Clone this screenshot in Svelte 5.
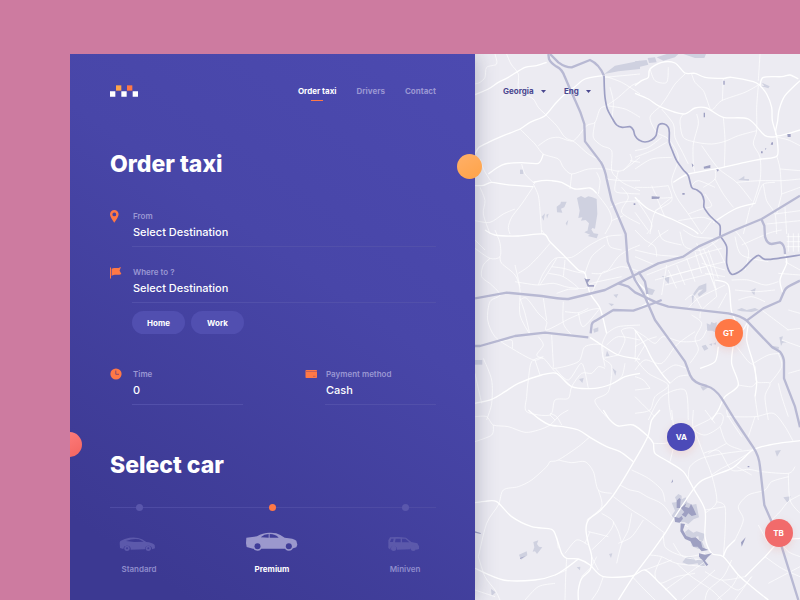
<script>
  let car = $state('Premium');
  const links = ['Order taxi', 'Drivers', 'Contact'];
  const pins = [
    { name: 'GT', x: 78, y: 51.1, color: '#ff7846' },
    { name: 'VA', x: 63.5, y: 70.2, color: '#4c4ab8' },
    { name: 'TB', x: 93.4, y: 87.8, color: '#f16b6b' }
  ];

  /* Turns straight survey lines into a curve through the same points. */
  function smooth(d) {
    if (/[HVQ]/.test(d)) return d;
    return d
      .split('M')
      .filter(Boolean)
      .map((part) => {
        const n = part.match(/[\d.]+/g).map(Number);
        const p = [];
        for (let i = 0; i < n.length; i += 2) p.push([n[i], n[i + 1]]);
        let out = `M${p[0]}`;
        for (let i = 0; i < p.length - 1; i++) {
          const a = p[i - 1] ?? p[i];
          const b = p[i];
          const c = p[i + 1];
          const e = p[i + 2] ?? c;
          const c1 = [b[0] + (c[0] - a[0]) / 7, b[1] + (c[1] - a[1]) / 7];
          const c2 = [c[0] - (e[0] - b[0]) / 7, c[1] - (e[1] - b[1]) / 7];
          out += `C${c1} ${c2} ${c}`;
        }
        return out;
      })
      .join('');
  }

  const highways = [
    'M220 0 222 15Q228 28 245 38 262 46 270 70L285 105 300 138Q318 175 328 210L330 262 378 325Q390 345 395 375L410 440 452 540 458 623 480 678 505 718 540 798 580 853 630 923 645 963Q655 988 695 996 720 1003 740 1033L780 1098 800 1128 835 1180Q852 1205 855 1238L868 1353 890 1403 920 1478 970 1638',
    'M0 733 95 716 200 726Q260 736 280 735L390 708 440 683 480 663 550 628 625 608Q650 590 670 578L780 528 860 495 975 425',
    'M430 688 460 698 480 715 550 748 580 758 760 778Q800 786 815 800L890 878 915 893Q928 910 927 928L927 973 960 1058 975 1120',
    'M815 800 865 763 915 741 925 718Q930 702 945 695L975 680',
    'M0 876H15L120 846 210 836 340 850',
    'M347 838 350 812Q352 804 362 800L415 768 475 770 530 750 560 738',
    'M490 653 510 683 517 720',
    'M860 497 868 515 870 548Q876 570 890 570L915 565Q930 570 930 600'
  ];
  const canals = ['M225 0 250 25Q270 40 290 40L345 18Q372 30 387 65'];
  const rivers = [
    'M387 65 388 100 390 130 397 165 410 190 425 213 442 220 465 218 475 228 480 245 492 258 510 264 530 258 543 245 547 225 552 212 568 210 580 220 583 235 583 265 592 290 605 320 625 348 640 365 650 400 666 408 680 420 687 440 687 460 702 482 720 500 735 515 735 545',
    'M735 545 755 578 755 628 770 661 800 648 830 618 850 604 870 616 910 613 975 603'
  ];
  const lakes = [
    'M388 60 420 35 495 20V45L430 52Z',
    'M480 22 515 18 520 32 480 42ZM518 12 540 10 545 25 522 27ZM545 10 575 0H610L600 10 565 20ZM625 0H693L688 12H660Z',
    'M306 432 318 426 330 432 340 427 352 430 365 435 367 480 360 524 352 522 345 535 338 527 342 508 332 498 318 500 322 490 310 492 314 470Z',
    'M245 458 256 450 258 443 275 443 268 460 258 464 262 476 246 475Z',
    'M200 488 210 478 206 500ZM214 482 221 479 216 494ZM272 508 280 497 276 515Z',
    'M135 347 145 347V360H135Z',
    'M0 918H22V932H0Z',
    'M328 535 340 528 350 528 356 538 370 540 365 553 338 546 345 542Z',
    'M355 825 370 820V832L357 836Z',
    'M415 722 430 720 424 732ZM400 748 417 750 410 757Z',
    'M396 890 404 907H392ZM412 942 424 952 421 965ZM312 975 326 972 322 987Z',
    'M850 97 868 96 860 86 884 97 880 103 868 99Z',
    'M790 378 808 366V375H822V380Z',
    'M560 666 583 669 581 690ZM515 700 540 708 532 723 515 720Z',
    'M650 727 664 706 672 696 694 688 694 712 672 728 668 720 684 706 672 708 656 728 654 756Z',
    'M695 808 706 812 709 804 718 808 725 804 725 838 712 830 697 830Z',
    'M680 876 692 872 700 884 688 890ZM702 871 712 868 710 876ZM714 870 723 865V872Z',
    'M826 710 842 702 838 724Z',
    'M913 850 924 847 920 860 936 865 923 866 918 876ZM890 875 912 879 910 891 890 884Z',
    'M676 997 702 998 684 1010Z',
    'M785 768 800 762 815 768 840 762 852 768 830 774 800 772Z',
    'M175 1464 190 1459 186 1470 192 1478 202 1480 186 1500 180 1492 173 1493 178 1480Z',
    'M132 1502 155 1492 157 1504 138 1517Z',
    'M900 1190 918 1188 912 1198 906 1208ZM925 1330 947 1327 938 1347Z',
    'M402 1500 412 1498 408 1512ZM305 1540 316 1538 315 1549Z',
    'M590 1346 606 1344 600 1330 610 1320 620 1325V1336L632 1330 636 1345 652 1352 664 1350 672 1390 656 1396 640 1410 628 1404 608 1405 590 1385 600 1370Z',
    'M630 1434 640 1426 655 1436 665 1432 690 1440 684 1462 672 1458 670 1446 655 1452 660 1462 634 1450Z',
    'M650 1468 680 1460 690 1483 678 1478 670 1485 650 1476Z',
    'M622 1525 635 1508 656 1512 662 1520 685 1508 690 1540 672 1536 668 1528 640 1532Z',
    'M48 1605 62 1615 50 1626Z'
  ];
  const ponds = [
    'M328 672 334 676 346 675 338 686 342 693H357V698H338Z',
    'M686 338 706 333V342L687 344ZM530 427 555 428 552 434 530 435Z',
    'M937 240H947V249H938ZM650 328 656 334 652 340Z',
    'M605 1340 613 1332 617 1336 615 1362H605ZM618 1362 634 1348 630 1358 642 1362 648 1350 655 1362 664 1382 650 1386 640 1378 632 1390 620 1382 628 1374Z',
    'M598 1388 612 1392 620 1386 624 1394 614 1406 600 1404Z',
    'M617 1408 630 1410 624 1428 634 1446 650 1452 662 1450 678 1464 682 1480 700 1488 680 1492 668 1478 655 1478 646 1462 630 1455 616 1432Z',
    'M672 1498 690 1502 711 1498 698 1510 690 1520 700 1532 694 1536 684 1520 672 1508Z',
    'M592 1276 594 1283 589 1288ZM798 1465 812 1450 808 1460 800 1478Z',
    'M0 1432 17 1437V1440L0 1436ZM135 1512 152 1506 136 1515Z',
    'M818 1236H823V1240H818ZM476 448H481V453H476ZM622 417H629V422H622ZM724 345 732 347 728 353Z',
    'M745 80H749V92H745ZM686 176H690V190H686ZM890 265H894V272H887ZM858 292H863V298H858ZM870 284 874 282 872 288Z'
  ];

  /* Road sheets are digitised in five tiles; x and y place each tile on the map. */
  const tiles = [
    {
      x: 0, y: 0,
      major: [
        'M0 300 12 280 40 265 85 245 135 225 165 205 210 185 240 150 270 120 300 98 330 75 382 65',
        'M0 122 40 105 70 85 100 70 150 40 185 35 215 25',
        'M0 395 25 394 50 385 95 392 175 398M40 360 65 342 90 330 140 326 190 328 205 300',
        'M175 385 200 380 230 380 260 385 300 405 345 402 365 418'
      ],
      minor: [
        'M0 90 15 85 30 70 35 40 65 30 60 0M95 0 108 30 130 60 130 100 150 120 175 135 190 160 210 180 245 215 270 250 300 265 340 300 380 320',
        'M190 275 220 255 250 250 295 260 335 215 360 205 375 165 395 155M135 225 180 270 205 300 250 315 265 340 290 360 340 345 395 345 440 350 495 310',
        'M290 360 285 405M15 315 28 350 50 385M175 390 190 425 195 470 200 540M175 398 140 450 110 490 100 520 105 540',
        'M140 330 150 360 180 390M0 500 45 505 85 480 120 465M15 400 30 440 25 480 45 540M365 418 400 465 410 500 390 540',
        'M360 205 355 250 380 275 410 290 410 350 430 375 450 390 495 410M385 65 440 85 495 120M390 70 495 60M395 155 450 165 495 190M395 155 430 130 470 95 495 85',
        'M395 375 440 380 495 380M430 350 420 410 460 418 495 420M440 400 460 430 440 475 495 510M465 320 495 325M405 460 440 445 495 440M445 350 470 320 465 300',
        'M370 420 375 380 365 355M410 500 445 485M405 100 415 145 410 200'
      ]
    },
    {
      x: 480, y: 0,
      major: [
        'M0 95 20 80 40 70 45 45 80 25 120 27 150 57 180 58 210 70 265 73 290 70 355 83 375 95 395 120 410 160 412 200 425 245',
        'M375 95 385 70 440 68 465 63 490 75M495 80 450 125 433 165 428 200 425 245 495 228',
        'M0 118 40 135 75 158 145 180 180 162 215 162 265 190 340 195 390 245 425 248',
        'M425 245 427 305 380 315 330 325 250 343 160 360 115 385',
        'M0 430 40 465 110 495 170 525 190 540M235 505 300 465 360 448'
      ],
      minor: [
        'M45 45 60 80 95 85 100 40M75 158 95 130 120 90 150 60M75 158 45 190 65 235 100 255 130 310 110 380 125 430 160 480 200 540',
        'M145 180 135 200 145 250 185 265 230 270 270 262 310 245 365 230M170 60 180 85 205 110 215 135 230 168 260 140 330 115 375 90M265 73 262 140',
        'M80 165 115 210 120 250 140 290 160 330M185 180 190 210 175 270 175 330 180 355M200 275 250 343 305 385 350 440M265 190 270 260 268 340',
        'M375 0 370 80M370 95 365 160 365 230 355 270 375 310 375 380 350 460M425 305 435 345 440 420M305 385 375 380 440 380 495 375',
        'M0 290 40 280 80 250M0 345 50 315 110 310M0 310 50 290 95 265M0 400 50 400 100 395M50 395 70 430 110 430M0 475 40 530M110 430 60 475 45 540M65 430 90 490',
        'M240 345 240 375 205 400M240 375 265 420 295 460M170 395 190 380 240 400M160 480 200 465 230 455 210 420M130 500 200 490 235 500',
        'M0 430 50 510 35 540M345 460 325 540M360 450 370 420 385 390 420 385M385 390 395 440 420 480 425 540M440 420 495 400M420 480 495 470M440 420 425 480M395 510 495 500M450 460 455 540',
        'M427 250 460 258 495 275M435 345 495 350M100 395 110 440 60 470M200 540 230 500'
      ]
    },
    {
      x: 0, y: 528,
      major: [
        'M30 0 60 15 130 18 205 12 225 35 270 80 310 120 330 130 345 190 375 235 395 310',
        'M0 520 50 508 90 485 130 460 200 435 245 430 290 470 360 475 410 462 450 440 495 430',
        'M345 322 380 345 430 375 495 388'
      ],
      minor: [
        'M60 0 75 40 75 80 45 85 0 55M75 80 80 100 120 135 135 180 135 255 165 315M225 40 190 80 160 110 130 130',
        'M45 85 25 105 20 140 50 165 75 195 45 215 38 270 60 320 110 355 175 390 205 385 240 425 290 470',
        'M120 155 150 160 190 165 235 160 280 172 330 175 350 160 440 140M190 165 205 130 240 85 290 82 345 45 395 20 440 15',
        'M245 85 230 110 195 165M230 110 265 115 300 125 330 130M220 130 265 140 310 175 280 178 245 190M135 210 155 205 190 250 215 275 215 300 285 265 345 240 375 235',
        'M265 215 265 280 290 315M165 315 150 250 135 205M270 245 310 248 340 235M310 248 325 290 375 235M205 205 215 270M190 320 205 345 185 375 205 385',
        'M75 335 110 330 112 355M230 315 235 400 240 415 310 395 330 350 380 345 385 385 410 410 400 485 360 510 380 545 405 570',
        'M205 380 170 395 160 450 155 500 155 545 225 555 240 510 280 505 290 470 320 430 350 430 370 410 390 415M180 390 195 435M240 415 280 450 320 400 340 475',
        'M25 385 50 450 50 520 35 570M0 430 20 520M350 190 380 130 400 120 430 80 460 60 495 45M350 130 380 130 440 110 495 125M395 20 405 50 440 60',
        'M330 130 350 80 390 45M395 310 430 290 495 285M395 345 430 320 495 330M430 375 450 330 440 300 480 300 480 388M410 462 440 440 450 400M395 310 380 350 390 410M385 385 430 375M225 555 240 570',
        'M120 105 135 170M265 140 270 90M200 0 210 15M0 30 30 60'
      ]
    },
    {
      x: 480, y: 528,
      major: [
        'M450 75 455 100 435 150 445 195M240 150 280 165 290 245 320 300 340 275 335 330 355 400 365 455 360 500',
        'M0 240 40 215 30 180 0 150M105 460 80 430 50 385 30 345 0 300M295 345 290 400 310 465 270 500 250 540 230 570',
        'M195 415 240 395 250 350'
      ],
      minor: [
        'M0 60 70 75 150 80M0 80 60 105M35 135 190 75 260 55M60 150 210 110 270 95M80 195 95 105M100 120 125 175M125 105 150 165M155 85 180 155M180 65 200 130',
        'M205 55 220 90 235 140 245 200M220 60 250 145M195 70 220 120 240 175M185 40 245 180M225 30 250 60 270 100M200 100 270 120M210 130 270 140M95 140 210 110M90 165 230 130',
        'M135 5 150 50 200 60 250 30M145 0 180 20 235 25M0 0 30 30 60 50 65 80M40 50 70 20 100 0M70 0 85 30 140 45M300 20 320 75 400 95M320 45 400 10 440 0M300 0 340 60 330 120',
        'M290 150 340 150 390 165 430 155M300 180 360 185 420 180M310 210 350 200 390 215M245 200 200 240 195 265M275 190 250 235M150 210 175 195 200 235M155 240 190 205 270 165',
        'M460 10V65M475 10V65M490 10V65M455 20H495M455 35H495M455 50H495',
        'M430 130 495 135M450 95 495 120M0 350 35 330 65 320',
        'M0 300 30 320 60 340 85 320 140 335 195 330 215 300M0 420 30 390 80 400 120 350 150 325 180 305M30 345 15 370 0 395M80 430 120 405 165 420M105 460 130 440 160 435',
        'M0 385 40 430 100 465 60 500 45 540 0 550M100 465 102 520 110 570M45 475 25 450 0 440M40 570 80 500 150 480 160 570M0 480 45 475M0 500 60 560',
        'M305 350 340 395 360 410 365 455 405 460 390 500 400 570M355 400 400 375 440 370M405 460 440 410 430 370M310 465 350 470 365 455M430 460 440 500 460 560M360 500 370 570',
        'M460 240 495 250M455 300 495 295M440 330 495 350M460 430 495 420M380 240 420 270 460 300M170 255 200 280 180 325 190 360 165 400'
      ]
    },
    {
      x: 0, y: 1068,
      major: [
        'M160 0 190 25 225 45 265 50 310 60 350 85 395 110 435 125 475 155M0 278 30 274 65 275 110 320 170 350 230 358 245 385 260 430 275 445 310 447 345 465 385 500 470 498 510 480 555 520 605 570',
        'M555 0 530 30 520 75 500 115 465 175 435 225 410 262 375 302 340 330 333 360 340 400 350 440 345 480 320 505 310 540 310 570',
        'M430 570 475 500 520 440 570 370 600 320 655 238 680 212 720 195 770 175 800 150 830 122 860 110 910 100 975 92',
        'M385 0 405 30 430 48 475 45 520 80 535 100 540 130 580 155 625 185 655 235 690 300 690 380 710 430 745 440 790 495 830 530 880 570',
        'M0 475 85 510 180 510 240 495 280 470 310 447M745 440 755 415 780 390M810 500 870 440 915 395 975 385'
      ],
      minor: [
        'M0 20 35 20 55 45 100 50 150 67 190 60 225 45 255 15 280 0M55 45 50 75 0 95M225 10 245 20 260 45M345 80 310 110 250 150 225 155 215 170 170 210 130 230 85 240 70 285 35 340 10 440',
        'M250 150 290 158 330 155 355 185 370 240 410 250M370 240 380 290 335 330M435 225 465 240 490 245 520 262 550 275 570 290 590 320M470 180 520 205 560 240 570 275M415 260 470 300 510 325 570 370',
        'M10 440 30 500 60 540 75 570M245 380 250 415M270 430 305 390 340 405M345 365 330 400M380 310 415 335 400 370 350 420M470 310 460 360 440 400 425 460M505 330 470 380 430 400',
        'M415 335 430 365 440 400M340 365 370 372 400 380M365 440 345 480M350 440 370 480M275 445 272 500 270 570M350 470 320 500M385 500 370 540 350 570M470 498 500 530 540 570M525 435 560 440 605 460 690 470',
        'M510 480 590 450M560 440 540 490 555 520 605 500 660 490M565 370 570 410 600 430 640 440 690 430M605 460 650 500 710 540 740 570M570 540 640 490 690 455M620 570 670 525 720 480M690 485 740 510 810 500',
        'M690 570 700 540 745 500 770 450M725 570 770 530 790 495M780 570 830 500M740 510 790 540 830 500M535 100 570 100 600 90 650 55 700 30 730 10 745 20 735 50 690 75 655 55 655 0M585 155 595 115M600 90 590 0',
        'M655 55 670 90 685 130 710 195 725 275 690 310M685 130 710 122 735 125 770 180 820 178 860 185 940 190 960 170M640 205 645 170 680 145 750 130 830 120M710 195 740 175 770 160 820 130M725 275 750 290 750 370 745 440',
        'M735 50 755 100 800 120M755 100 700 130M690 0 720 40M755 20 840 20 895 10 930 50 955 95M840 20 820 80M755 0 760 20 800 80M785 170 830 195M780 390 805 330 790 290 820 255 870 240 890 215 940 200',
        'M890 330 915 305 940 275 975 255M940 190 945 270 975 310M870 440 920 475 975 500M880 520 975 470M915 395 940 425 975 440M850 345 880 400',
        'M150 570 190 530 240 520M0 540 60 560M240 495 275 480M600 320 615 338 640 350M595 400 625 440 690 450M690 300 750 290'
      ]
    }
  ];
</script>

<main class="app">
  <section class="panel">
    <header class="top">
      <a class="logo" href="#home" aria-label="Home page">
        <svg width="29" height="12" viewBox="0 0 87 36">
          <path d="M0 19H16V35H0ZM34 19H50V35H34ZM68 19H84V35H68Z" fill="#fff" />
          <path d="M18 1H34V17H18Z" fill="#ffa549" />
          <path d="M51 1H67V17H51Z" fill="#ff7846" />
        </svg>
      </a>
      <nav>
        {#each links as link, i}
          <a href="#{link}" class:active={i === 0}>{link}</a>
        {/each}
      </nav>
    </header>

    <h1>Order taxi</h1>

    <form>
      <div class="field">
        <svg class="icon" viewBox="0 0 16 16"><path fill-rule="evenodd" d="M4.300 0A4.300 4.300 0 0 0 0 4.300C0 7.400 4.300 12.700 4.300 12.700S8.600 7.400 8.600 4.300A4.300 4.300 0 0 0 4.300 0ZM4.300 2.500A1.900 1.900 0 1 1 4.300 6.300 1.900 1.900 0 1 1 4.300 2.500Z" /></svg>
        <div class="entry">
          <label for="from">From</label>
          <input id="from" placeholder="Select Destination" />
        </div>
      </div>
      <div class="field">
        <svg class="icon" viewBox="0 0 16 16"><path d="M0 1.500H1V12.500H0ZM1.600 2.700C4.500 1 6.500 3.300 10.900 1L9.600 4.700 11.400 8C7.500 9.900 5 7.700 1.600 10Z" /></svg>
        <div class="entry">
          <label for="to">Where to ?</label>
          <input id="to" placeholder="Select Destination" />
        </div>
      </div>
      <div class="chips">
        <button type="button">Home</button>
        <button type="button">Work</button>
      </div>
      <div class="pair">
        <div class="field">
          <svg class="icon" viewBox="0 0 16 16"><circle cx="6" cy="6" r="5.600" /><path d="M5.800 2.500V6.300H9" fill="none" stroke="#8a4a70" stroke-width="1" /></svg>
          <div class="entry">
            <label for="time">Time</label>
            <input id="time" value="0" />
          </div>
        </div>
        <div class="field">
          <svg class="icon" viewBox="0 0 16 16"><path d="M3.200 2H13.300Q14 2 14 2.800V9.200Q14 10 13.300 10H3.200Q2.500 10 2.500 9.200V2.800Q2.500 2 3.200 2Z" /><path d="M2.500 3.500H14M10 8.300H12.500" fill="none" stroke="#b85a60" stroke-width="0.800" /></svg>
          <div class="entry">
            <label for="pay">Payment method</label>
            <select id="pay"><option>Cash</option></select>
          </div>
        </div>
      </div>

      <h2>Select car</h2>

      <div class="cars">
        <label class="car">
          <input type="radio" value="Standard" bind:group={car} />
          <svg viewBox="120 126 174 60">
            <path fill-rule="evenodd" d="M149 158 151 153Q164 146 178 143.500 202 141 216 148L229 156Q246 157 254 165L255 175 246 178A10.500 10.500 0 0 0 225 178L182 179A10.500 10.500 0 0 0 160 177L150 174ZM168 153Q190 144 207 148L221 155 193 156Z" />
            <circle cx="171" cy="175" r="8" /><circle cx="235" cy="175" r="8" />
            <g class="hub"><circle cx="171" cy="175" r="3" /><circle cx="235" cy="175" r="3" /></g>
          </svg>
          <span>Standard</span>
        </label>
        <label class="car">
          <input type="radio" value="Premium" bind:group={car} />
          <svg viewBox="24 126 174 60">
            <path fill-rule="evenodd" d="M34 143 66 139Q83 128 103 128 124 127 136 135L149 143Q177 145 184 152L187 164 184 172 170 176 54 176 35 171 33 160ZM77 142 101 143V132Q88 132 77 142ZM104 132V143L131 143Q122 132 104 132Z" />
            <circle cx="67.500" cy="170" r="12" /><circle cx="161.500" cy="170" r="12" />
            <g class="hub"><circle cx="67.500" cy="169" r="9" /><circle cx="161.500" cy="169" r="9" /></g>
          </svg>
          <span>Premium</span>
        </label>
        <label class="car">
          <input type="radio" value="Miniven" bind:group={car} />
          <svg viewBox="423 126 174 60">
            <path fill-rule="evenodd" d="M460 151 465 142Q490 139 513 143L529 156 547 160 552 169V177L544 179A10 10 0 0 0 525 178L486 179A10 10 0 0 0 466 179L460 174ZM465 156H474L476 146H469ZM480 157H497V146H482ZM501 157H523L511 146H501Z" />
            <circle cx="476" cy="175" r="8" /><circle cx="535" cy="175" r="8" />
          </svg>
          <span>Miniven</span>
        </label>
      </div>
    </form>
    <i class="dot amber"></i>
    <i class="dot coral"></i>
  </section>

  <section class="map">
    <svg class="roads" viewBox="0 0 975 1638" preserveAspectRatio="xMinYMin slice" aria-hidden="true">
      {#each lakes as d}<path class="lake" {d} />{/each}
      {#each canals as d}<path class="highway" {d} />{/each}
      {#each tiles as tile}
        <g transform="translate({tile.x} {tile.y})">
          {#each tile.minor as d}<path class="minor" d={smooth(d)} />{/each}
          {#each tile.major as d}<path class="major" d={smooth(d)} />{/each}
        </g>
      {/each}
      {#each ponds as d}<path class="pond" {d} />{/each}
      {#each rivers as d}<path class="river" d={smooth(d)} />{/each}
      {#each highways as d}<path class="highway" {d} />{/each}
    </svg>
    <div class="locale">
      <div class="pick">
        <select aria-label="Country"><option>Georgia</option></select>
        <svg width="5" height="3" viewBox="0 0 5 3"><path d="M0 0H5L2.500 3Z" /></svg>
      </div>
      <div class="pick">
        <select aria-label="Language"><option>Eng</option></select>
        <svg width="5" height="3" viewBox="0 0 5 3"><path d="M0 0H5L2.500 3Z" /></svg>
      </div>
    </div>
    {#each pins as pin}
      <button class="pin" style="left:{pin.x}%;top:{pin.y}%;background:{pin.color}">{pin.name}</button>
    {/each}
  </section>
</main>

<style>
  :global(body) {
    margin: 0;
    background: #cd7ba0;
  }
  .app,
  .app * {
    box-sizing: border-box;
  }
  .app {
    display: flex;
    min-height: calc(100vh - 54px);
    margin: 54px 0 0 70px;
    overflow: hidden;
    font-family: Inter, 'Liberation Sans', sans-serif;
  }
  input,
  select,
  button {
    margin: 0;
    padding: 0;
    border: 0;
    border-radius: 0;
    background: none;
    color: inherit;
    font: inherit;
    appearance: none;
  }
  .panel {
    position: relative;
    z-index: 1;
    flex: 0 0 405px;
    padding: 29px 39px 24px 40px;
    color: #fff;
    background: linear-gradient(215deg, #4c4ab0 0%, #4846a8 40%, #3c3992 90%);
    box-shadow: 0 0 20px rgba(60, 65, 100, 0.35);
  }
  .top {
    display: flex;
    align-items: center;
    justify-content: space-between;
    height: 16px;
  }
  .logo {
    display: flex;
  }
  nav {
    display: flex;
    gap: 20px;
  }
  nav a {
    position: relative;
    color: #9a97d3;
    font-size: 8px;
    font-weight: 700;
    line-height: 16px;
    text-decoration: none;
  }
  nav a.active {
    color: #fff;
  }
  nav a.active::after {
    content: '';
    position: absolute;
    left: 50%;
    bottom: -2px;
    width: 12px;
    height: 1px;
    margin-left: -6px;
    background: #ff7846;
  }
  h1,
  h2 {
    margin: 51px 0 32px;
    font-size: 23px;
    font-weight: 800;
    line-height: 28px;
  }
  h2 {
    margin: 46px 0 25px;
  }
  .field {
    display: flex;
    margin-bottom: 19px;
  }
  .icon {
    flex: none;
    width: 16px;
    height: 16px;
    margin-right: 6px;
    fill: #ff7846;
  }
  .entry {
    display: flex;
    flex: 1;
    flex-direction: column;
    min-width: 0;
    padding: 0 0 4px 1px;
    border-bottom: 1px solid #5250aa;
  }
  .entry label {
    color: #9a97d3;
    font-size: 8px;
    font-weight: 600;
    line-height: 12px;
  }
  .entry input,
  .entry select {
    width: 100%;
    height: 20px;
    font-size: 11px;
    font-weight: 500;
    line-height: 20px;
  }
  .entry input::placeholder {
    color: #fff;
    opacity: 1;
  }
  .chips {
    display: flex;
    gap: 6px;
    margin: -11px 0 34px 22px;
  }
  .chips button {
    width: 53px;
    height: 23px;
    border-radius: 12px;
    background: #514fb0;
    font-size: 8px;
    font-weight: 700;
  }
  .pair {
    display: grid;
    grid-template-columns: 1fr 1fr;
    gap: 60px;
  }
  .pair .field {
    margin: 0;
  }
  .cars {
    position: relative;
    display: flex;
    justify-content: space-between;
    padding-right: 2px;
  }
  .cars::before {
    content: '';
    position: absolute;
    top: 3px;
    left: 0;
    right: 0;
    height: 1px;
    background: #4e4ba4;
  }
  .car {
    position: relative;
    display: flex;
    flex-direction: column;
    align-items: center;
    width: 58px;
    color: #8f8ccc;
    font-size: 8px;
    font-weight: 600;
    line-height: 12px;
  }
  .car input {
    width: 7px;
    height: 7px;
    border-radius: 50%;
    background: #5a57ac;
  }
  .car svg {
    width: 58px;
    height: 20px;
    margin: 21px 0 11px;
    fill: #5c59ab;
  }
  .car .hub {
    fill: #403d98;
  }
  .car:has(input:checked) {
    color: #fff;
    font-weight: 700;
  }
  .car input:checked {
    background: #ff7846;
  }
  .car:has(input:checked) svg {
    fill: #9b98cd;
  }
  .dot {
    position: absolute;
    width: 25px;
    height: 25px;
    border-radius: 50%;
  }
  .amber {
    top: 100px;
    right: -7px;
    background: linear-gradient(150deg, #ffb069, #ffa347);
  }
  .coral {
    top: 378px;
    left: -13px;
    background: linear-gradient(150deg, #ff8080, #f3645f);
  }
  .map {
    position: relative;
    flex: 1;
    min-width: 0;
    background: #ecebf2;
  }
  .roads {
    position: absolute;
    inset: 0;
    width: 100%;
    height: 100%;
    fill: none;
    stroke-linejoin: round;
  }
  .minor {
    stroke: #fff;
    stroke-width: 3;
    opacity: 0.7;
  }
  .major {
    stroke: #fff;
    stroke-width: 4;
  }
  .highway {
    stroke: #b8b9d3;
    stroke-width: 7;
  }
  .river {
    stroke: #9d9fc4;
    stroke-width: 5;
  }
  .lake {
    fill: #cfd1e0;
  }
  .pond {
    fill: #9ea0c2;
  }
  .locale {
    position: relative;
    display: flex;
    gap: 18px;
    padding: 29px 28px;
    color: #4a478f;
    font-size: 8px;
    font-weight: 700;
  }
  .pick {
    display: flex;
    align-items: center;
    gap: 7px;
    height: 16px;
  }
  .pick svg {
    fill: #4a478f;
  }
  .pin {
    position: absolute;
    width: 28px;
    height: 28px;
    border-radius: 50%;
    color: #fff;
    font-size: 8px;
    font-weight: 700;
    transform: translate(-50%, -50%);
    box-shadow: 0 3px 9px rgba(240, 130, 110, 0.2);
  }
</style>
